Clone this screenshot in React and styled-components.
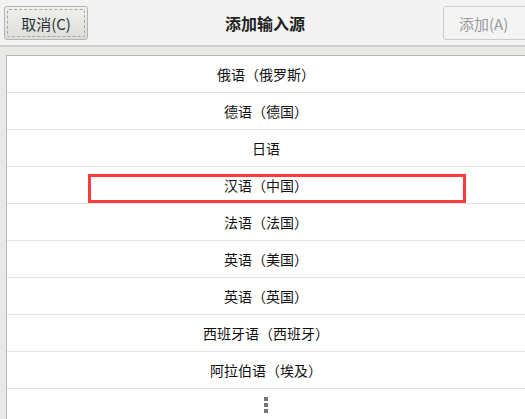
import React from 'react'
import styled, { createGlobalStyle } from 'styled-components'

const GlobalStyle = createGlobalStyle`
  html, body {
    margin: 0;
    padding: 0;
    background: #e8e8e7;
  }
  body {
    font-family: "Noto Sans CJK SC", "DejaVu Sans", sans-serif;
  }
`

const languages = [
  '俄语（俄罗斯）',
  '德语（德国）',
  '日语',
  '汉语（中国）',
  '法语（法国）',
  '英语（美国）',
  '英语（英国）',
  '西班牙语（西班牙）',
  '阿拉伯语（埃及）',
]

const App = () => {
  return (
    <Window>
      <GlobalStyle />
      <Header>
        <Left>
          <Button>取消(C)</Button>
        </Left>
        <Title>添加输入源</Title>
        <Right>
          <Button disabled>添加(A)</Button>
        </Right>
      </Header>

      <Content>
        <Panel>
          {languages.map((name, i) => (
            <Row key={name}>
              {name}
              {i === 3 && <Highlight />}
            </Row>
          ))}
          <More>
            <span />
            <span />
            <span />
          </More>
        </Panel>
      </Content>
    </Window>
  )
}

const Window = styled.div`
  width: 525px;
  height: 419px;
  overflow: hidden;
  background: #e8e8e7;
  display: flex;
  flex-direction: column;
`

const Header = styled.div`
  height: 45px;
  flex-shrink: 0;
  background: #f3f3f3;
  border-bottom: 2px solid #cfcfce;
  display: grid;
  grid-template-columns: 1fr auto 1fr;
  align-items: center;
  overflow: hidden;
`

const Left = styled.div`
  display: flex;
  padding-left: 4px;
`

const Right = styled.div`
  display: flex;
  justify-content: flex-end;
  margin-right: -8px;
`

const Title = styled.div`
  font-size: 16px;
  font-weight: bold;
  color: #222;
  padding-left: 5px;
`

const Button = styled.button`
  position: relative;
  height: 34px;
  width: ${p => (p.disabled ? '90px' : '84px')};
  margin-top: 1px;
  border-radius: 3px;
  font-family: "Noto Sans CJK SC", "DejaVu Sans", sans-serif;
  font-size: 15px;
  padding: 0;
  border: 1px solid ${p => (p.disabled ? '#cdcdcd' : '#b4b4b2')};
  color: ${p => (p.disabled ? '#9a9a9a' : '#2e3436')};
  background: ${p =>
    p.disabled ? '#f4f4f4' : 'linear-gradient(#f0f0ef, #dddddb)'};
  text-align: ${p => (p.disabled ? 'left' : 'center')};
  padding-left: ${p => (p.disabled ? '15px' : '0')};

  &::after {
    content: '';
    display: ${p => (p.disabled ? 'none' : 'block')};
    position: absolute;
    inset: 2px;
    border: 1px dashed #a8a8a6;
    border-radius: 2px;
  }
`

const Content = styled.div`
  flex: 1;
  padding: 8px 0 0 6px;
  display: flex;
`

const Panel = styled.div`
  flex: 1;
  background: #fff;
  border-top: 1px solid #b6b6b4;
  border-left: 1px solid #b6b6b4;
`

const Row = styled.div`
  position: relative;
  height: 36px;
  border-bottom: 1px solid #e4e4e4;
  display: flex;
  align-items: center;
  justify-content: center;
  font-size: 14px;
  color: #111;
`

const Highlight = styled.div`
  position: absolute;
  left: 81px;
  top: 7px;
  width: 378px;
  height: 29px;
  box-sizing: border-box;
  border: 3px solid #ff3b3b;
`

const More = styled.div`
  display: flex;
  flex-direction: column;
  align-items: center;
  gap: 2px;
  padding-top: 8px;

  span {
    width: 4px;
    height: 4px;
    background: #777;
  }
`

export default App
